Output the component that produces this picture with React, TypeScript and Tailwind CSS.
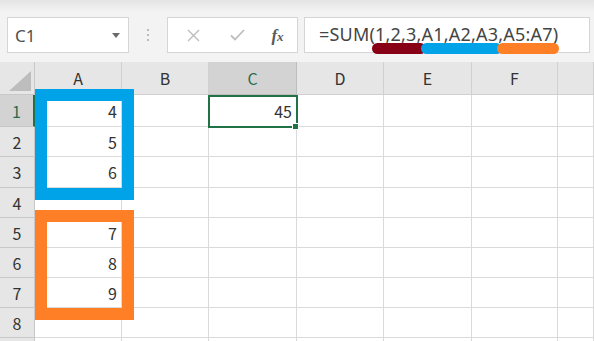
import React from 'react';

const COLS = ['A', 'B', 'C', 'D', 'E', 'F', ''];
const ROWS = [1, 2, 3, 4, 5, 6, 7, 8];

// values in column A / C keyed by row
const VALUES: Record<string, string> = {
  A1: '4',
  A2: '5',
  A3: '6',
  A5: '7',
  A6: '8',
  A7: '9',
  C1: '45',
};

const Toolbar = () => (
  <div className="relative h-[62px] bg-[#f3f3f3]">
    {/* faint top band */}
    <div className="h-[12px] bg-gradient-to-b from-[#e4e4e4] to-[#f3f3f3]" />

    <div className="flex items-start pl-[7px] pt-[5px]">
      {/* Name box */}
      <div className="flex h-[36px] w-[122px] items-center justify-between border border-[#d5d5d5] bg-white pl-[7px] pr-[8px]">
        <span className="text-[17px] leading-none text-[#505050]">C1</span>
        <svg width="8" height="5" viewBox="0 0 8 5" className="mt-[1px]">
          <path d="M0 0 H8 L4 5 Z" fill="#6b6b6b" />
        </svg>
      </div>

      {/* splitter dots */}
      <div className="flex h-[36px] w-[38px] flex-col items-center justify-center gap-[3px]">
        <span className="h-[2px] w-[2px] rounded-full bg-[#a8a8a8]" />
        <span className="h-[2px] w-[2px] rounded-full bg-[#a8a8a8]" />
        <span className="h-[2px] w-[2px] rounded-full bg-[#a8a8a8]" />
      </div>

      {/* cancel / enter / fx */}
      <div className="flex h-[36px] w-[131px] items-center border border-[#d5d5d5] bg-white">
        <div className="flex w-[46px] justify-center pl-[4px]">
          <svg width="13" height="13" viewBox="0 0 13 13">
            <path d="M1 1 L12 12 M12 1 L1 12" stroke="#bdbdbd" strokeWidth="1.4" />
          </svg>
        </div>
        <div className="flex w-[46px] justify-center">
          <svg width="15" height="12" viewBox="0 0 15 12">
            <path d="M1 6.5 L5 10.5 L14 1" stroke="#bdbdbd" strokeWidth="1.8" fill="none" />
          </svg>
        </div>
        <div className="flex flex-1 justify-center pr-[2px]">
          <span className="font-['Liberation_Serif',serif] text-[17px] font-bold italic leading-none text-[#5a5a5a]">
            f<span className="text-[13px]">x</span>
          </span>
        </div>
      </div>

      {/* formula input */}
      <div className="ml-[6px] flex h-[36px] w-[286px] items-center border border-[#d5d5d5] bg-white pb-[2px] pl-[14px]">
        <span className="font-['Noto_Sans',sans-serif] text-[18px] leading-none tracking-[0.2px] text-[#444]">
          =SUM(1,2,3,A1,A2,A3,A5:A7)
        </span>
      </div>
    </div>

    {/* highlighter strokes under the arguments */}
    <div className="absolute left-[372px] top-[43px] h-[11px] w-[54px] rounded-full bg-[#880015]" />
    <div className="absolute left-[421px] top-[43px] h-[11px] w-[81px] rounded-full bg-[#00a2e8]" />
    <div className="absolute left-[497px] top-[43px] h-[11px] w-[62px] rounded-full bg-[#ff7f27]" />
  </div>
);

const Sheet = () => (
  <div className="relative">
    <div className="grid grid-cols-[35px_87px_87px_88px_87px_88px_86px_1fr] grid-rows-[33px_32px_30px_31px_30px_30px_30px_30px_30px_30px] bg-white font-['Noto_Sans_CJK_JP','Noto_Sans',sans-serif]">
      {/* corner */}
      <div className="flex items-end justify-end border-b border-r border-[#c8c8c8] bg-[#e6e6e6] pb-[3px] pr-[3px]">
        <svg width="22" height="20" viewBox="0 0 22 20">
          <path d="M22 0 V20 H0 Z" fill="#bdbdbd" />
        </svg>
      </div>
      {COLS.map((c, i) => (
        <div
          key={'h' + i}
          className={
            c === 'C'
              ? 'flex items-center justify-center border-b border-r border-[#bdbdbd] bg-[#d3d3d3] text-[16px] text-[#2c6b4a]'
              : 'flex items-center justify-center border-b border-r border-[#d0d0d0] bg-[#e6e6e6] text-[16px] text-[#333]'
          }
        >
          {c}
        </div>
      ))}

      {ROWS.map((r) => (
        <React.Fragment key={r}>
          <div
            className={
              r === 1
                ? 'flex items-center justify-center border-b border-r-2 border-b-[#c8c8c8] border-r-[#217346] bg-[#d3d3d3] text-[16px] text-[#2c6b4a]'
                : 'flex items-center justify-center border-b border-r border-[#c8c8c8] bg-[#e6e6e6] text-[16px] text-[#333]'
            }
          >
            {r}
          </div>
          {COLS.map((c, i) => (
            <div
              key={c + i + r}
              className="flex items-center justify-end border-b border-r border-[#dadada] pr-[4px] text-[16px] text-[#333]"
            >
              {VALUES[c + r] ?? ''}
            </div>
          ))}
        </React.Fragment>
      ))}

      {/* partially visible row below */}
      <div className="border-r border-[#c8c8c8] bg-[#e6e6e6]" />
      {COLS.map((c, i) => (
        <div key={'last' + i} className="border-r border-[#dadada]" />
      ))}
    </div>

    {/* active cell C1 */}
    <div className="absolute left-[208px] top-[33px] h-[33px] w-[90px] border-2 border-[#217346]" />
    <div className="absolute left-[292px] top-[61px] h-[7px] w-[7px] border border-white bg-[#217346]" />

    {/* range highlights */}
    <div className="absolute left-[35px] top-[27px] h-[111px] w-[99px] border-[12px] border-[#00a2e8]" />
    <div className="absolute left-[35px] top-[148px] h-[110px] w-[99px] border-[12px] border-[#ff7f27]" />
  </div>
);

export default function App() {
  return (
    <div className="h-[341px] w-[594px] overflow-hidden bg-[#f3f3f3] font-['Noto_Sans',sans-serif]">
      <Toolbar />
      <Sheet />
    </div>
  );
}
